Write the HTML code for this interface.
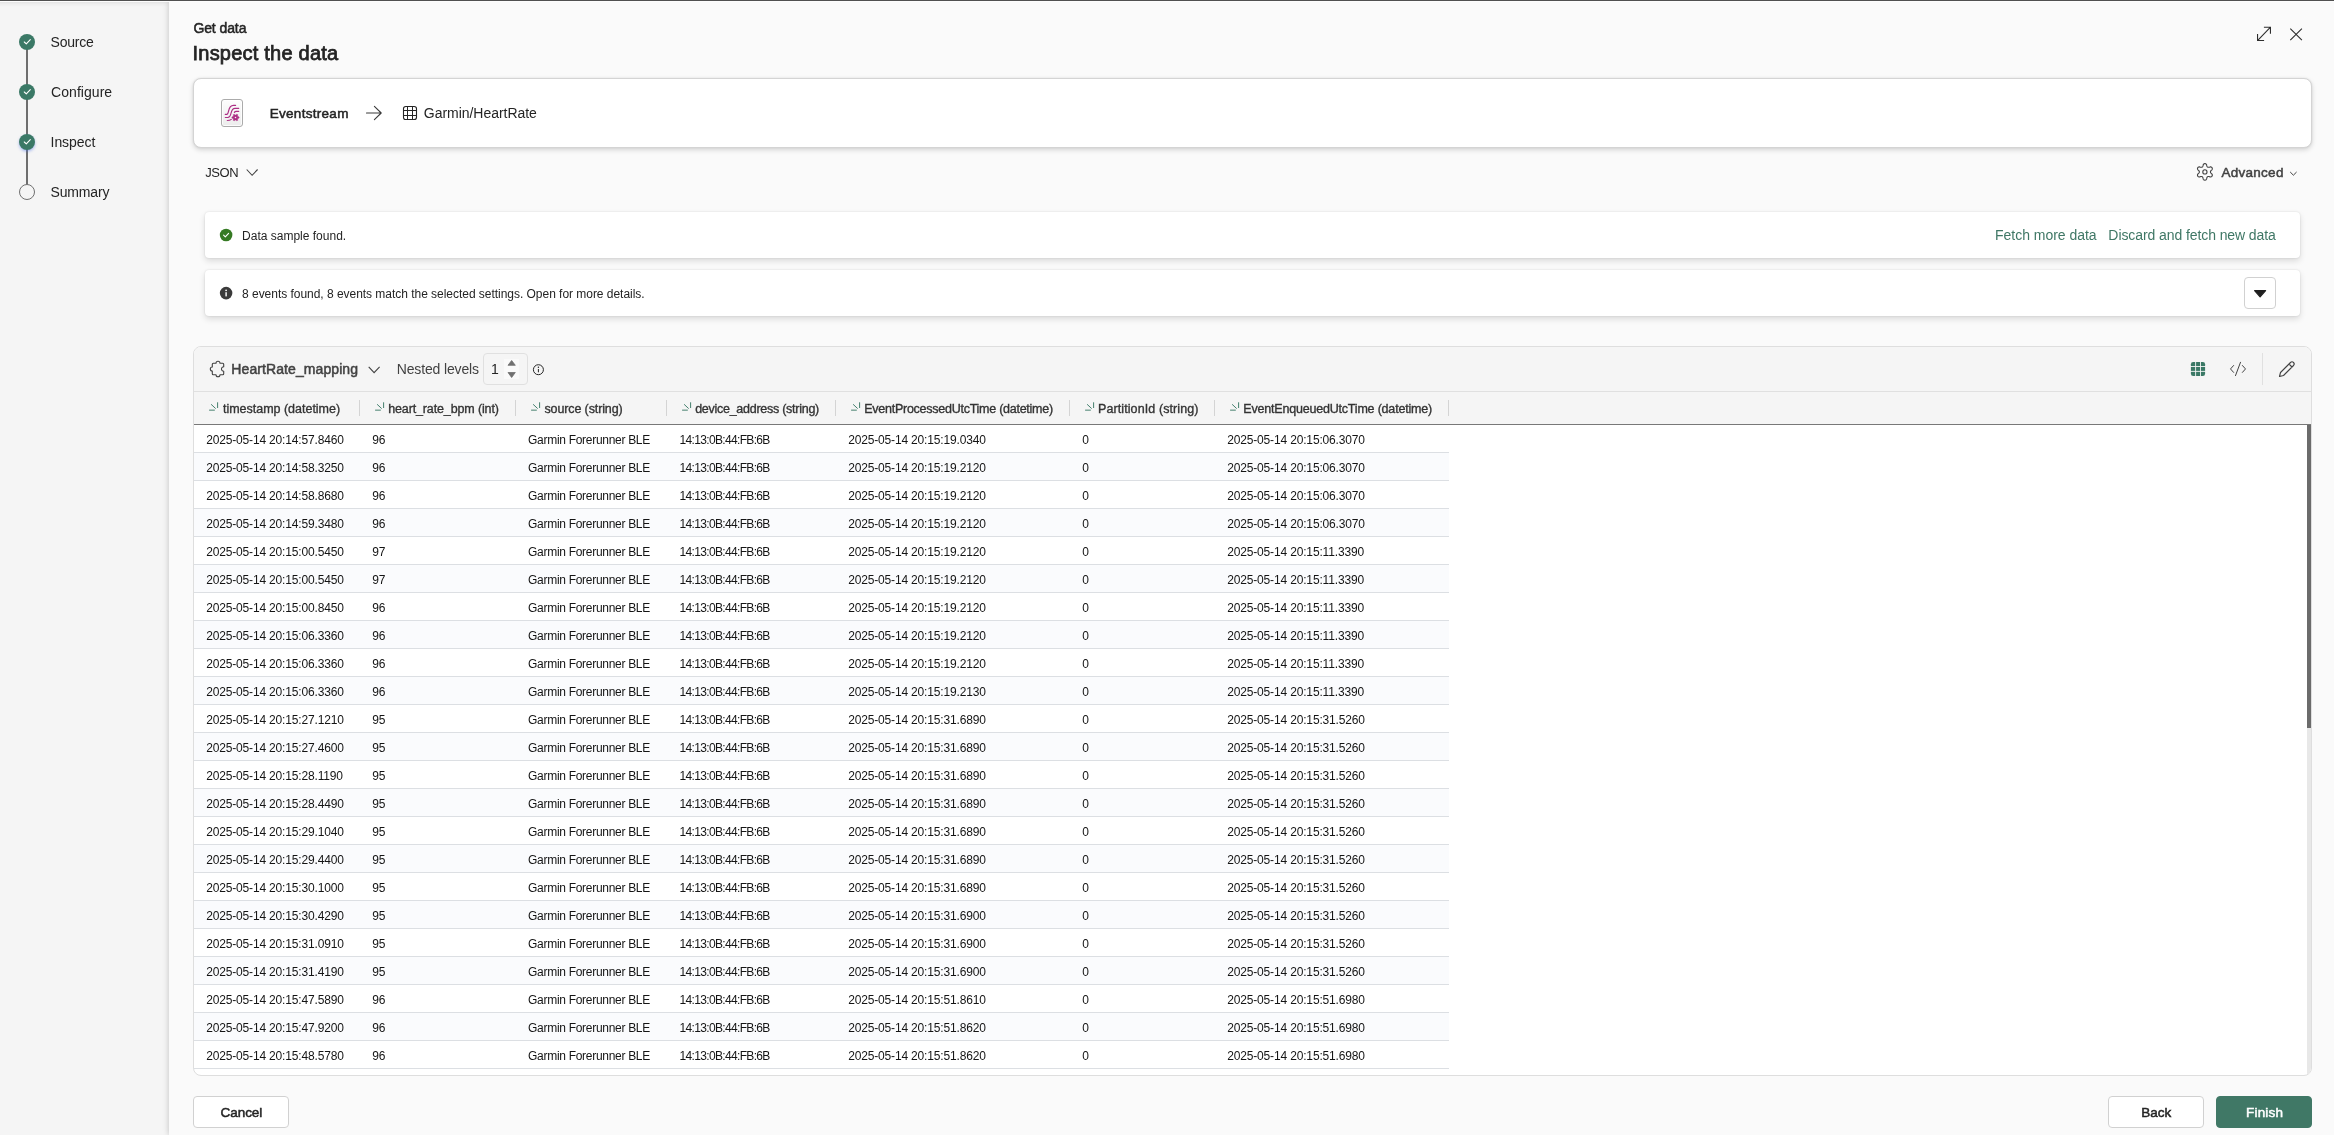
<!DOCTYPE html>
<html lang="en">
<head>
<meta charset="utf-8">
<title>Get data - Inspect the data</title>
<style>
*{box-sizing:border-box;margin:0;padding:0}
html,body{width:2334px;height:1135px;overflow:hidden}
body{font-family:"Liberation Sans",sans-serif;color:#242424;background:#fafafa;position:relative;font-size:14px}
.abs{position:absolute}
.layer{position:absolute;left:0;top:0;width:2334px;height:1135px;will-change:transform}
.side{left:0;top:2px;width:169px;height:1133px;background:linear-gradient(rgba(0,0,0,.07),rgba(0,0,0,.03) 2px,rgba(0,0,0,0) 5px) #f5f5f5}
.main{left:169px;top:2px;width:2165px;height:1133px;background:#fafafa;box-shadow:0 0 6px rgba(0,0,0,.22)}
.topline{left:0;top:0;width:2334px;height:1px;background:#505050}
.topline2{left:0;top:1px;width:2334px;height:1px;background:#fdfdfd}
.dot{position:absolute;left:19px;width:16px;height:16px;border-radius:50%;background:#3b7966}
.dot svg{display:block}
.dot.empty{background:#f5f5f5;border:1px solid #707070}
.vline{position:absolute;left:26px;width:2px;background:#6e6e6e}
.t{position:absolute;white-space:nowrap;line-height:20px}
.card{left:193px;top:78px;width:2119px;height:70px;background:#fff;border:1px solid #d4d4d4;border-radius:8px;box-shadow:0 2px 5px rgba(0,0,0,.15),0 0 2px rgba(0,0,0,.08)}
.msg{left:205px;width:2095px;height:46px;background:#fff;border-radius:4px;box-shadow:0 3px 6px rgba(0,0,0,.13),0 0 2px rgba(0,0,0,.12)}
.grid{left:193px;top:346px;width:2119px;height:730px;background:#fff;border:1px solid #dedede;border-radius:8px;overflow:hidden}
.tool{position:absolute;left:0;top:0;width:100%;height:45px;background:#f5f5f5;border-bottom:1px solid #e0e0e0}
.thead{position:absolute;left:0;top:45px;width:100%;height:33px;background:#f5f5f5;border-bottom:1px solid #787878}
.tr{position:absolute;left:194px;width:1255px;height:28px;border-bottom:1px solid #dcdfe3;background:#fff}
.tr.alt{background:#fafbfd}
.tr span{position:absolute;font-size:12px;line-height:28px;color:#141414;white-space:nowrap}
.c1{left:12.25px;letter-spacing:-0.169px}
.c2{left:178.14px;letter-spacing:-0.141px}
.c3{left:334.09px;letter-spacing:-0.294px}
.c4{left:485.57px;letter-spacing:-0.666px}
.c5{left:654.25px;letter-spacing:-0.169px}
.c6{left:888.32px;letter-spacing:0.000px}
.c7{left:1033.19px;letter-spacing:-0.158px}
.tr span{top:0.64px}
.btn{position:absolute;height:32px;width:96px;border:1px solid #d1d1d1;border-radius:4px;background:#fff}
.btn.pri{background:#407866;border-color:#407866}
</style>
</head>
<body>
<div class="abs side"></div>
<div class="abs main"></div>
<div class="abs topline"></div>
<div class="abs topline2"></div>

<!-- stepper -->
<div class="vline" style="top:42px;height:150px"></div>
<div class="dot" style="top:34px"><svg width="16" height="16" viewBox="0 0 16 16"><path d="M5.300 8 L7.300 9.900 L11.300 5.700" fill="none" stroke="#fff" stroke-width="1.100" stroke-linecap="round" stroke-linejoin="round"/></svg></div>
<div class="dot" style="top:84px"><svg width="16" height="16" viewBox="0 0 16 16"><path d="M5.300 8 L7.300 9.900 L11.300 5.700" fill="none" stroke="#fff" stroke-width="1.100" stroke-linecap="round" stroke-linejoin="round"/></svg></div>
<div class="dot" style="top:134px;box-shadow:0 1.500px 3px rgba(70,110,230,.45)"><svg width="16" height="16" viewBox="0 0 16 16"><path d="M5.300 8 L7.300 9.900 L11.300 5.700" fill="none" stroke="#fff" stroke-width="1.100" stroke-linecap="round" stroke-linejoin="round"/></svg></div>
<div class="dot empty" style="top:184px"></div>

<!-- window buttons -->
<svg class="abs" style="left:2256px;top:26px" width="16" height="16" viewBox="0 0 16 16"><path d="M1.750 14.300 L14.250 1.400 M7.900 1.200 H14.450 V7.800 M1.550 7.900 V14.500 H8.100" fill="none" stroke="#2e2e2e" stroke-width="1.1"/></svg>
<svg class="abs" style="left:2289px;top:27px" width="14" height="14" viewBox="0 0 14 14"><path d="M1.3 1.6 L12.9 13.2 M12.9 1.6 L1.3 13.2" fill="none" stroke="#2e2e2e" stroke-width="1.1"/></svg>

<!-- card -->
<div class="abs card"></div>
<div class="abs" style="left:221px;top:99px;width:22px;height:28px;border:1px solid #ababab;border-radius:3px;background:linear-gradient(#fdfdfd,#ececec);box-shadow:inset 0 0 0 1px rgba(255,255,255,.8)"></div>
<svg class="abs" style="left:212px;top:92px" width="40" height="42" viewBox="0 0 40 42"><g fill="none" stroke="#ad2f85" stroke-width="1.150" stroke-linecap="round"><path d="M13.300 22.400 H14.800 C17.600 22.400 15.200 13.400 21.500 13.400 H23.600"/><path d="M13.300 25.500 H15.800 C20.500 25.500 17.500 16.400 23 16.400 H26.700"/><path d="M22.400 20.400 C22.800 19.700 23.300 19.400 24.200 19.400 H26.700"/><path d="M15.300 28.500 C17 28.500 18.300 28.200 19.300 27.400"/></g><path d="M27.07 25.03 L27.07 25.97 L25.90 26.49 L25.56 27.08 L25.69 28.36 L24.88 28.83 L23.84 28.08 L23.16 28.08 L22.12 28.83 L21.31 28.36 L21.44 27.08 L21.10 26.49 L19.93 25.97 L19.93 25.03 L21.10 24.51 L21.44 23.92 L21.31 22.64 L22.12 22.17 L23.16 22.92 L23.84 22.92 L24.88 22.17 L25.69 22.64 L25.56 23.92 L25.90 24.51 Z" fill="#ad2f85" stroke="#ad2f85" stroke-width=".5" stroke-linejoin="round"/><circle cx="23.500" cy="25.500" r=".75" fill="#f4f4f4"/></svg>
<svg class="abs" style="left:364px;top:104px" width="20" height="18" viewBox="0 0 20 18"><path d="M2.500 9 H17 M10.400 2.400 L17.200 9 L10.400 15.600" fill="none" stroke="#3a3a3a" stroke-width="1.100" stroke-linecap="round" stroke-linejoin="round"/></svg>
<svg class="abs" style="left:402px;top:105px" width="16" height="16" viewBox="0 0 16 16"><rect x="1.500" y="1.500" width="13" height="13" rx="2.300" fill="none" stroke="#242424" stroke-width="1.100"/><path d="M5.500 1.500 V14.500 M10.500 1.500 V14.500 M1.500 5.500 H14.500 M1.500 10.500 H14.500" stroke="#242424" stroke-width="1"/></svg>

<!-- json / advanced -->
<svg class="abs" style="left:245px;top:167px" width="14" height="10" viewBox="0 0 14 10"><path d="M1.700 2.500 L7.100 8.300 L12.600 2.500" fill="none" stroke="#424242" stroke-width="1.100"/></svg>
<svg class="abs" style="left:2190px;top:157px" width="30" height="30" viewBox="0 0 30 30"><g fill="none" stroke="#424242" stroke-width="1.100" stroke-linejoin="round"><circle cx="14.900" cy="14.900" r="2.100"/><path d="M20.42 14.90 L20.44 14.71 L20.49 14.51 L20.57 14.30 L20.68 14.09 L20.83 13.85 L21.02 13.60 L21.29 13.31 L21.84 12.91 L22.07 12.57 L22.21 12.24 L22.28 11.92 L22.30 11.60 L22.27 11.30 L22.19 11.02 L22.07 10.76 L21.91 10.52 L21.70 10.31 L21.45 10.14 L21.17 10.00 L20.86 9.90 L20.51 9.85 L20.09 9.89 L19.47 10.17 L19.09 10.25 L18.77 10.29 L18.49 10.30 L18.25 10.29 L18.03 10.26 L17.84 10.20 L17.66 10.12 L17.50 10.01 L17.35 9.87 L17.22 9.69 L17.09 9.49 L16.96 9.24 L16.83 8.95 L16.71 8.57 L16.65 7.90 L16.47 7.52 L16.25 7.24 L16.01 7.01 L15.75 6.84 L15.47 6.72 L15.19 6.64 L14.90 6.62 L14.61 6.64 L14.33 6.72 L14.05 6.84 L13.79 7.01 L13.55 7.24 L13.33 7.52 L13.15 7.90 L13.09 8.57 L12.97 8.95 L12.84 9.24 L12.71 9.49 L12.58 9.69 L12.45 9.87 L12.30 10.01 L12.14 10.12 L11.96 10.20 L11.77 10.26 L11.55 10.29 L11.31 10.30 L11.03 10.29 L10.71 10.25 L10.33 10.17 L9.71 9.89 L9.29 9.85 L8.94 9.90 L8.63 10.00 L8.35 10.14 L8.10 10.31 L7.89 10.52 L7.73 10.76 L7.61 11.02 L7.53 11.30 L7.50 11.60 L7.52 11.92 L7.59 12.24 L7.73 12.57 L7.96 12.91 L8.51 13.31 L8.78 13.60 L8.97 13.85 L9.12 14.09 L9.23 14.30 L9.31 14.51 L9.36 14.71 L9.38 14.90 L9.36 15.09 L9.31 15.29 L9.23 15.50 L9.12 15.71 L8.97 15.95 L8.78 16.20 L8.51 16.49 L7.96 16.89 L7.73 17.23 L7.59 17.56 L7.52 17.88 L7.50 18.20 L7.53 18.50 L7.61 18.78 L7.73 19.04 L7.89 19.28 L8.10 19.49 L8.35 19.66 L8.63 19.80 L8.94 19.90 L9.29 19.95 L9.71 19.91 L10.33 19.63 L10.71 19.55 L11.03 19.51 L11.31 19.50 L11.55 19.51 L11.77 19.54 L11.96 19.60 L12.14 19.68 L12.30 19.79 L12.45 19.93 L12.58 20.11 L12.71 20.31 L12.84 20.56 L12.97 20.85 L13.09 21.23 L13.15 21.90 L13.33 22.28 L13.55 22.56 L13.79 22.79 L14.05 22.96 L14.33 23.08 L14.61 23.16 L14.90 23.18 L15.19 23.16 L15.47 23.08 L15.75 22.96 L16.01 22.79 L16.25 22.56 L16.47 22.28 L16.65 21.90 L16.71 21.23 L16.83 20.85 L16.96 20.56 L17.09 20.31 L17.22 20.11 L17.35 19.93 L17.50 19.79 L17.66 19.68 L17.84 19.60 L18.03 19.54 L18.25 19.51 L18.49 19.50 L18.77 19.51 L19.09 19.55 L19.47 19.63 L20.09 19.91 L20.51 19.95 L20.86 19.90 L21.17 19.80 L21.45 19.66 L21.70 19.49 L21.91 19.28 L22.07 19.04 L22.19 18.78 L22.27 18.50 L22.30 18.20 L22.28 17.88 L22.21 17.56 L22.07 17.23 L21.84 16.89 L21.29 16.49 L21.02 16.20 L20.83 15.95 L20.68 15.71 L20.57 15.50 L20.49 15.29 L20.44 15.09 Z"/></g></svg>
<svg class="abs" style="left:2289px;top:170px" width="9" height="7" viewBox="0 0 9 7"><path d="M1.200 2 L4.400 5.200 L7.600 2" fill="none" stroke="#424242" stroke-width="1"/></svg>

<!-- message bars -->
<div class="abs msg" style="top:212px"></div>
<svg class="abs" style="left:219px;top:228px" width="14" height="14" viewBox="0 0 14 14"><circle cx="7.100" cy="7" r="6.300" fill="#357a23"/><path d="M4.600 7.200 L6.300 8.900 L9.600 5.400" fill="none" stroke="#fff" stroke-width="1.100" stroke-linecap="round" stroke-linejoin="round"/></svg>
<div class="abs msg" style="top:270px"></div>
<svg class="abs" style="left:219px;top:286px" width="14" height="14" viewBox="0 0 14 14"><circle cx="7.100" cy="7.100" r="6.300" fill="#3a3a3a"/><rect x="6.400" y="6.200" width="1.400" height="4.200" fill="#fff"/><circle cx="7.100" cy="4.300" r=".9" fill="#fff"/></svg>
<div class="abs" style="left:2244px;top:277px;width:32px;height:32px;border:1px solid #d1d1d1;border-radius:4px;background:#fff"></div>
<svg class="abs" style="left:2253px;top:289px" width="14" height="10" viewBox="0 0 14 10"><path d="M1.600 1.600 H12.600 L7.100 7.800 Z" fill="#1f1f1f" stroke="#1f1f1f" stroke-width="1.200" stroke-linejoin="round"/></svg>

<!-- grid -->
<div class="abs grid">
  <div class="tool"></div>
  <div class="thead"></div>
  <div style="position:absolute;right:0;top:78px;width:4px;height:652px;background:#e8e8e8"></div>
  <div style="position:absolute;right:0;top:78px;width:4px;height:303px;background:#6b6b6b"></div>
</div>
<div class="layer">
<div class="tr" style="top:425px"><span class="c1">2025-05-14 20:14:57.8460</span><span class="c2">96</span><span class="c3">Garmin Forerunner BLE</span><span class="c4">14:13:0B:44:FB:6B</span><span class="c5">2025-05-14 20:15:19.0340</span><span class="c6">0</span><span class="c7">2025-05-14 20:15:06.3070</span></div>
<div class="tr alt" style="top:453px"><span class="c1">2025-05-14 20:14:58.3250</span><span class="c2">96</span><span class="c3">Garmin Forerunner BLE</span><span class="c4">14:13:0B:44:FB:6B</span><span class="c5">2025-05-14 20:15:19.2120</span><span class="c6">0</span><span class="c7">2025-05-14 20:15:06.3070</span></div>
<div class="tr" style="top:481px"><span class="c1">2025-05-14 20:14:58.8680</span><span class="c2">96</span><span class="c3">Garmin Forerunner BLE</span><span class="c4">14:13:0B:44:FB:6B</span><span class="c5">2025-05-14 20:15:19.2120</span><span class="c6">0</span><span class="c7">2025-05-14 20:15:06.3070</span></div>
<div class="tr alt" style="top:509px"><span class="c1">2025-05-14 20:14:59.3480</span><span class="c2">96</span><span class="c3">Garmin Forerunner BLE</span><span class="c4">14:13:0B:44:FB:6B</span><span class="c5">2025-05-14 20:15:19.2120</span><span class="c6">0</span><span class="c7">2025-05-14 20:15:06.3070</span></div>
<div class="tr" style="top:537px"><span class="c1">2025-05-14 20:15:00.5450</span><span class="c2">97</span><span class="c3">Garmin Forerunner BLE</span><span class="c4">14:13:0B:44:FB:6B</span><span class="c5">2025-05-14 20:15:19.2120</span><span class="c6">0</span><span class="c7">2025-05-14 20:15:11.3390</span></div>
<div class="tr alt" style="top:565px"><span class="c1">2025-05-14 20:15:00.5450</span><span class="c2">97</span><span class="c3">Garmin Forerunner BLE</span><span class="c4">14:13:0B:44:FB:6B</span><span class="c5">2025-05-14 20:15:19.2120</span><span class="c6">0</span><span class="c7">2025-05-14 20:15:11.3390</span></div>
<div class="tr" style="top:593px"><span class="c1">2025-05-14 20:15:00.8450</span><span class="c2">96</span><span class="c3">Garmin Forerunner BLE</span><span class="c4">14:13:0B:44:FB:6B</span><span class="c5">2025-05-14 20:15:19.2120</span><span class="c6">0</span><span class="c7">2025-05-14 20:15:11.3390</span></div>
<div class="tr alt" style="top:621px"><span class="c1">2025-05-14 20:15:06.3360</span><span class="c2">96</span><span class="c3">Garmin Forerunner BLE</span><span class="c4">14:13:0B:44:FB:6B</span><span class="c5">2025-05-14 20:15:19.2120</span><span class="c6">0</span><span class="c7">2025-05-14 20:15:11.3390</span></div>
<div class="tr" style="top:649px"><span class="c1">2025-05-14 20:15:06.3360</span><span class="c2">96</span><span class="c3">Garmin Forerunner BLE</span><span class="c4">14:13:0B:44:FB:6B</span><span class="c5">2025-05-14 20:15:19.2120</span><span class="c6">0</span><span class="c7">2025-05-14 20:15:11.3390</span></div>
<div class="tr alt" style="top:677px"><span class="c1">2025-05-14 20:15:06.3360</span><span class="c2">96</span><span class="c3">Garmin Forerunner BLE</span><span class="c4">14:13:0B:44:FB:6B</span><span class="c5">2025-05-14 20:15:19.2130</span><span class="c6">0</span><span class="c7">2025-05-14 20:15:11.3390</span></div>
<div class="tr" style="top:705px"><span class="c1">2025-05-14 20:15:27.1210</span><span class="c2">95</span><span class="c3">Garmin Forerunner BLE</span><span class="c4">14:13:0B:44:FB:6B</span><span class="c5">2025-05-14 20:15:31.6890</span><span class="c6">0</span><span class="c7">2025-05-14 20:15:31.5260</span></div>
<div class="tr alt" style="top:733px"><span class="c1">2025-05-14 20:15:27.4600</span><span class="c2">95</span><span class="c3">Garmin Forerunner BLE</span><span class="c4">14:13:0B:44:FB:6B</span><span class="c5">2025-05-14 20:15:31.6890</span><span class="c6">0</span><span class="c7">2025-05-14 20:15:31.5260</span></div>
<div class="tr" style="top:761px"><span class="c1">2025-05-14 20:15:28.1190</span><span class="c2">95</span><span class="c3">Garmin Forerunner BLE</span><span class="c4">14:13:0B:44:FB:6B</span><span class="c5">2025-05-14 20:15:31.6890</span><span class="c6">0</span><span class="c7">2025-05-14 20:15:31.5260</span></div>
<div class="tr alt" style="top:789px"><span class="c1">2025-05-14 20:15:28.4490</span><span class="c2">95</span><span class="c3">Garmin Forerunner BLE</span><span class="c4">14:13:0B:44:FB:6B</span><span class="c5">2025-05-14 20:15:31.6890</span><span class="c6">0</span><span class="c7">2025-05-14 20:15:31.5260</span></div>
<div class="tr" style="top:817px"><span class="c1">2025-05-14 20:15:29.1040</span><span class="c2">95</span><span class="c3">Garmin Forerunner BLE</span><span class="c4">14:13:0B:44:FB:6B</span><span class="c5">2025-05-14 20:15:31.6890</span><span class="c6">0</span><span class="c7">2025-05-14 20:15:31.5260</span></div>
<div class="tr alt" style="top:845px"><span class="c1">2025-05-14 20:15:29.4400</span><span class="c2">95</span><span class="c3">Garmin Forerunner BLE</span><span class="c4">14:13:0B:44:FB:6B</span><span class="c5">2025-05-14 20:15:31.6890</span><span class="c6">0</span><span class="c7">2025-05-14 20:15:31.5260</span></div>
<div class="tr" style="top:873px"><span class="c1">2025-05-14 20:15:30.1000</span><span class="c2">95</span><span class="c3">Garmin Forerunner BLE</span><span class="c4">14:13:0B:44:FB:6B</span><span class="c5">2025-05-14 20:15:31.6890</span><span class="c6">0</span><span class="c7">2025-05-14 20:15:31.5260</span></div>
<div class="tr alt" style="top:901px"><span class="c1">2025-05-14 20:15:30.4290</span><span class="c2">95</span><span class="c3">Garmin Forerunner BLE</span><span class="c4">14:13:0B:44:FB:6B</span><span class="c5">2025-05-14 20:15:31.6900</span><span class="c6">0</span><span class="c7">2025-05-14 20:15:31.5260</span></div>
<div class="tr" style="top:929px"><span class="c1">2025-05-14 20:15:31.0910</span><span class="c2">95</span><span class="c3">Garmin Forerunner BLE</span><span class="c4">14:13:0B:44:FB:6B</span><span class="c5">2025-05-14 20:15:31.6900</span><span class="c6">0</span><span class="c7">2025-05-14 20:15:31.5260</span></div>
<div class="tr alt" style="top:957px"><span class="c1">2025-05-14 20:15:31.4190</span><span class="c2">95</span><span class="c3">Garmin Forerunner BLE</span><span class="c4">14:13:0B:44:FB:6B</span><span class="c5">2025-05-14 20:15:31.6900</span><span class="c6">0</span><span class="c7">2025-05-14 20:15:31.5260</span></div>
<div class="tr" style="top:985px"><span class="c1">2025-05-14 20:15:47.5890</span><span class="c2">96</span><span class="c3">Garmin Forerunner BLE</span><span class="c4">14:13:0B:44:FB:6B</span><span class="c5">2025-05-14 20:15:51.8610</span><span class="c6">0</span><span class="c7">2025-05-14 20:15:51.6980</span></div>
<div class="tr alt" style="top:1013px"><span class="c1">2025-05-14 20:15:47.9200</span><span class="c2">96</span><span class="c3">Garmin Forerunner BLE</span><span class="c4">14:13:0B:44:FB:6B</span><span class="c5">2025-05-14 20:15:51.8620</span><span class="c6">0</span><span class="c7">2025-05-14 20:15:51.6980</span></div>
<div class="tr" style="top:1041px"><span class="c1">2025-05-14 20:15:48.5780</span><span class="c2">96</span><span class="c3">Garmin Forerunner BLE</span><span class="c4">14:13:0B:44:FB:6B</span><span class="c5">2025-05-14 20:15:51.8620</span><span class="c6">0</span><span class="c7">2025-05-14 20:15:51.6980</span></div>
</div>
<svg class="abs" style="left:209px;top:402px" width="11" height="11" viewBox="0 0 11 11"><path d="M2.100 2.300 L6.700 6.600 M0.100 8.150 H5.800 M8.600 0.300 V6" fill="none" stroke="#3b7966" stroke-width=".95"/></svg>
<div class="abs" style="left:359px;top:400px;width:1px;height:16px;background:#d4d4d4"></div>
<svg class="abs" style="left:375px;top:402px" width="11" height="11" viewBox="0 0 11 11"><path d="M2.100 2.300 L6.700 6.600 M0.100 8.150 H5.800 M8.600 0.300 V6" fill="none" stroke="#3b7966" stroke-width=".95"/></svg>
<div class="abs" style="left:515px;top:400px;width:1px;height:16px;background:#d4d4d4"></div>
<svg class="abs" style="left:531px;top:402px" width="11" height="11" viewBox="0 0 11 11"><path d="M2.100 2.300 L6.700 6.600 M0.100 8.150 H5.800 M8.600 0.300 V6" fill="none" stroke="#3b7966" stroke-width=".95"/></svg>
<div class="abs" style="left:666px;top:400px;width:1px;height:16px;background:#d4d4d4"></div>
<svg class="abs" style="left:682px;top:402px" width="11" height="11" viewBox="0 0 11 11"><path d="M2.100 2.300 L6.700 6.600 M0.100 8.150 H5.800 M8.600 0.300 V6" fill="none" stroke="#3b7966" stroke-width=".95"/></svg>
<div class="abs" style="left:835px;top:400px;width:1px;height:16px;background:#d4d4d4"></div>
<svg class="abs" style="left:851px;top:402px" width="11" height="11" viewBox="0 0 11 11"><path d="M2.100 2.300 L6.700 6.600 M0.100 8.150 H5.800 M8.600 0.300 V6" fill="none" stroke="#3b7966" stroke-width=".95"/></svg>
<div class="abs" style="left:1069px;top:400px;width:1px;height:16px;background:#d4d4d4"></div>
<svg class="abs" style="left:1085px;top:402px" width="11" height="11" viewBox="0 0 11 11"><path d="M2.100 2.300 L6.700 6.600 M0.100 8.150 H5.800 M8.600 0.300 V6" fill="none" stroke="#3b7966" stroke-width=".95"/></svg>
<div class="abs" style="left:1214px;top:400px;width:1px;height:16px;background:#d4d4d4"></div>
<svg class="abs" style="left:1230px;top:402px" width="11" height="11" viewBox="0 0 11 11"><path d="M2.100 2.300 L6.700 6.600 M0.100 8.150 H5.800 M8.600 0.300 V6" fill="none" stroke="#3b7966" stroke-width=".95"/></svg>
<div class="abs" style="left:1448px;top:400px;width:1px;height:16px;background:#d4d4d4"></div>

<svg class="abs" style="left:200px;top:350px" width="30" height="30" viewBox="0 0 30 30"><path d="M13.300 13.300 H16 A2 2 0 1 1 20 13.300 H22.700 A1 1 0 0 1 23.700 14.300 V16.800 A2.200 2.200 0 1 0 23.700 21.200 V23.700 A1 1 0 0 1 22.700 24.700 H20 A2 2 0 1 1 16 24.700 H13.300 A1 1 0 0 1 12.300 23.700 V21 A2 2 0 1 1 12.300 17 V14.300 A1 1 0 0 1 13.300 13.300 Z" fill="none" stroke="#424242" stroke-width="1.100" stroke-linejoin="round"/></svg>
<svg class="abs" style="left:367px;top:364px" width="14" height="10" viewBox="0 0 14 10"><path d="M1.700 2.800 L7.100 8.600 L12.600 2.800" fill="none" stroke="#424242" stroke-width="1.100"/></svg>
<div class="abs" style="left:483px;top:353px;width:45px;height:32px;border:1px solid #e0e0e0;border-radius:4px;background:#f5f5f5"></div>
<div class="abs" style="left:504px;top:359px;width:15px;height:20px;background:#fafafa"></div>
<svg class="abs" style="left:505px;top:358px" width="14" height="22" viewBox="0 0 14 22"><path d="M3 7.300 H10.300 L6.650 2.500 Z M3 14.500 H10.300 L6.650 19.500 Z" fill="#707070" stroke="#707070" stroke-width=".8" stroke-linejoin="round"/></svg>
<svg class="abs" style="left:532px;top:363px" width="13" height="13" viewBox="0 0 13 13"><circle cx="6.400" cy="6.700" r="5" fill="none" stroke="#242424" stroke-width="1"/><path d="M6.400 6 V9.300" stroke="#242424" stroke-width="1"/><circle cx="6.400" cy="4.300" r=".7" fill="#242424"/></svg>

<svg class="abs" style="left:2190px;top:361px" width="16" height="16" viewBox="0 0 16 16"><rect x="0.900" y="0.900" width="14.200" height="14.200" rx="2.300" fill="#3b7966"/><path d="M5.600 0 V16 M10.500 0 V16 M0 5.500 H16 M0 10.400 H16" stroke="#f5f5f5" stroke-width=".9"/></svg>
<svg class="abs" style="left:2228px;top:361px" width="20" height="16" viewBox="0 0 20 16"><path d="M5.600 4.500 L2.500 7.950 L5.600 11.400 M14.400 4.500 L17.500 7.950 L14.400 11.400 M12.500 1.300 L7.500 14.600" fill="none" stroke="#424242" stroke-width="1" stroke-linecap="round" stroke-linejoin="round"/></svg>
<div class="abs" style="left:2262px;top:353px;width:1px;height:32px;background:#e0e0e0"></div>
<svg class="abs" style="left:2277px;top:359px" width="20" height="20" viewBox="0 0 20 20"><path d="M2.500 17.500 L3.500 13.500 L13.500 3.500 a2.100 2.100 0 0 1 3 3 L6.500 16.500 Z M12 5 L15 8" fill="none" stroke="#424242" stroke-width="1.100" stroke-linejoin="round"/></svg>

<!-- footer -->
<div class="btn" style="left:193px;top:1096px"></div>
<div class="btn" style="left:2108px;top:1096px"></div>
<div class="btn pri" style="left:2216px;top:1096px"></div>

<div class="layer">
<div class="t" style="left:50.54px;top:32.35px;font-size:14px;color:#242424;letter-spacing:-0.224px">Source</div>
<div class="t" style="left:51.08px;top:82.35px;font-size:14px;color:#242424;letter-spacing:0.045px">Configure</div>
<div class="t" style="left:50.56px;top:132.35px;font-size:14px;color:#242424;letter-spacing:-0.060px">Inspect</div>
<div class="t" style="left:50.54px;top:182.35px;font-size:14px;color:#242424;letter-spacing:-0.165px">Summary</div>
<div class="t" style="left:193.38px;top:18.15px;font-size:14px;-webkit-text-stroke:0.5px;color:#242424;letter-spacing:-0.091px">Get data</div>
<div class="t" style="left:192.53px;top:43.07px;font-size:20px;-webkit-text-stroke:0.75px;color:#242424;letter-spacing:0.222px">Inspect the data</div>
<div class="t" style="left:269.72px;top:103.92px;font-size:13.5px;-webkit-text-stroke:0.5px;color:#242424;letter-spacing:0.292px">Eventstream</div>
<div class="t" style="left:423.86px;top:103.15px;font-size:14px;color:#242424;letter-spacing:-0.041px">Garmin/HeartRate</div>
<div class="t" style="left:205.35px;top:162.80px;font-size:13px;color:#242424;letter-spacing:-0.487px">JSON</div>
<div class="t" style="left:2221.48px;top:162.62px;font-size:13.5px;-webkit-text-stroke:0.5px;color:#424242;letter-spacing:0.270px">Advanced</div>
<div class="t" style="left:242.11px;top:225.84px;font-size:12px;color:#242424;letter-spacing:-0.002px">Data sample found.</div>
<div class="t" style="left:1995.07px;top:225.15px;font-size:14px;color:#3f7765;letter-spacing:-0.029px">Fetch more data</div>
<div class="t" style="left:2108.37px;top:225.15px;font-size:14px;color:#3f7765;letter-spacing:-0.086px">Discard and fetch new data</div>
<div class="t" style="left:242.05px;top:283.64px;font-size:12px;color:#242424;letter-spacing:-0.031px">8 events found, 8 events match the selected settings. Open for more details.</div>
<div class="t" style="left:231.35px;top:359.35px;font-size:14px;-webkit-text-stroke:0.5px;color:#424242;letter-spacing:0.085px">HeartRate_mapping</div>
<div class="t" style="left:396.77px;top:359.35px;font-size:14px;color:#424242;letter-spacing:-0.148px">Nested levels</div>
<div class="t" style="left:491.04px;top:359.35px;font-size:14px;color:#242424;letter-spacing:0.000px">1</div>
<div class="t" style="left:220.45px;top:1102.72px;font-size:13.5px;-webkit-text-stroke:0.5px;color:#242424;letter-spacing:-0.024px">Cancel</div>
<div class="t" style="left:2141.33px;top:1102.72px;font-size:13.5px;-webkit-text-stroke:0.5px;color:#242424;letter-spacing:-0.023px">Back</div>
<div class="t" style="left:2246.01px;top:1102.72px;font-size:13.5px;-webkit-text-stroke:0.5px;color:#ffffff;letter-spacing:0.195px">Finish</div>
<div class="t" style="left:222.98px;top:398.67px;font-size:12.5px;-webkit-text-stroke:0.35px;color:#333333;letter-spacing:-0.013px">timestamp (datetime)</div>
<div class="t" style="left:388.22px;top:398.67px;font-size:12.5px;-webkit-text-stroke:0.35px;color:#333333;letter-spacing:-0.136px">heart_rate_bpm (int)</div>
<div class="t" style="left:544.41px;top:398.67px;font-size:12.5px;-webkit-text-stroke:0.35px;color:#333333;letter-spacing:-0.113px">source (string)</div>
<div class="t" style="left:695.14px;top:398.67px;font-size:12.5px;-webkit-text-stroke:0.35px;color:#333333;letter-spacing:-0.263px">device_address (string)</div>
<div class="t" style="left:864.28px;top:398.67px;font-size:12.5px;-webkit-text-stroke:0.35px;color:#333333;letter-spacing:-0.258px">EventProcessedUtcTime (datetime)</div>
<div class="t" style="left:1097.99px;top:398.67px;font-size:12.5px;-webkit-text-stroke:0.35px;color:#333333;letter-spacing:0.098px">PartitionId (string)</div>
<div class="t" style="left:1243.28px;top:398.67px;font-size:12.5px;-webkit-text-stroke:0.35px;color:#333333;letter-spacing:-0.196px">EventEnqueuedUtcTime (datetime)</div>
</div>
</body>
</html>
